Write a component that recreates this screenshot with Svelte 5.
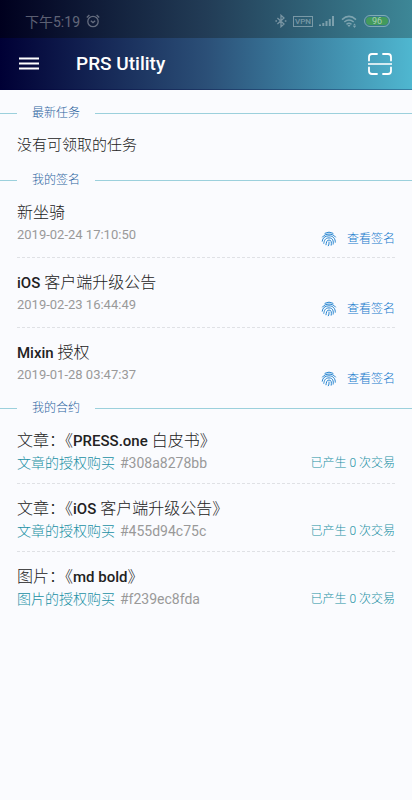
<script>
  const signatures = [
    { title: [['新坐骑', false]], date: '2019-02-24 17:10:50' },
    { title: [['iOS', true], [' 客户端升级公告', false]], date: '2019-02-23 16:44:49' },
    { title: [['Mixin', true], [' 授权', false]], date: '2019-01-28 03:47:37' }
  ];
  const contracts = [
    { kind: '文章', title: [['PRESS.one', true], [' 白皮书', false]], hash: '#308a8278bb', count: 0 },
    { kind: '文章', title: [['iOS', true], [' 客户端升级公告', false]], hash: '#455d94c75c', count: 0 },
    { kind: '图片', title: [['md bold', true]], hash: '#f239ec8fda', count: 0 }
  ];
</script>

{#snippet runs(parts)}{#each parts as [text, latin]}<span class:latin>{text}</span>{/each}{/snippet}

{#snippet heading(text)}
  <h2 class="divider"><span>{text}</span></h2>
{/snippet}

<div class="page">
  <div class="status">
    <span class="time">下午5:19</span>
    <svg width="14" height="14" viewBox="0 0 14 14" class="line" aria-hidden="true">
      <circle cx="7" cy="7.5" r="5.2" stroke-width="1.3" /><path stroke-width="1.3" d="M4.8 6.8 7 8.6l2.2-1.8M.8 3.4 3.4 1M13.2 3.4 10.6 1" />
    </svg>
    <div class="tray">
      <svg width="12" height="14" viewBox="0 0 12 14" class="line" aria-hidden="true">
        <path stroke-width="1.3" d="M2.4 4 9 10l-3 2.7V1.3L9 4l-6.6 6M.4 7h1.6M9.8 7h1.6" />
      </svg>
      <span class="vpn">VPN</span>
      <svg width="16" height="12" viewBox="0 0 16 12" class="solid" aria-hidden="true">
        <path d="M0 9.5h2V11H0zM3.3 8h2v3h-2zM6.5 6h2v5h-2zM9.8 4h2v7h-2zM13 1h2v10h-2z" />
      </svg>
      <svg width="17" height="13" viewBox="0 0 17 13" aria-hidden="true">
        <path class="line thick" d="M1 4.600q7-6.4 14 0M3.300 7q4.700-4 9.400 0M5.500 9.300q2.500-2 5 0" />
        <path class="solid" d="m6.400 10.300 1.600 1.700 1.600-1.700q-1.600-1-3.200 0zM12 10.500l1.500-2 1.500 2zM12 11h3l-1.500 2z" />
      </svg>
      <span class="battery"><span>96</span></span>
    </div>
  </div>

  <header>
    <button class="icon" aria-label="菜单">
      <svg width="20" height="13" viewBox="0 0 20 13"><path d="M0 1.5h20M0 6.5h20M0 11.5h20" stroke="#fff" stroke-width="2.2" /></svg>
    </button>
    <h1>PRS Utility</h1>
    <button class="icon scan" aria-label="扫码">
      <svg width="24" height="22" viewBox="0 0 24 22" fill="none" stroke="#fff" stroke-width="1.8">
        <path d="M1 7.500V4q0-3 3-3h5M15 1h5q3 0 3 3v3.500M1 14.500V18q0 3 3 3h5M15 21h5q3 0 3-3v-3.500" stroke-linecap="round" />
        <path d="M0 11h24" stroke-opacity=".85" />
      </svg>
    </button>
  </header>

  <main>
    <section>
      {@render heading('最新任务')}
      <p class="empty">没有可领取的任务</p>
    </section>

    <section>
      {@render heading('我的签名')}
      <ul>
        {#each signatures as item}
          <li>
            <h3>{@render runs(item.title)}</h3>
            <div class="meta">
              <time>{item.date}</time>
              <a class="view" href="#signature">
                <svg width="16" height="16" viewBox="0 0 16 16" aria-hidden="true">
                  <path d="M4 2.200q4-2.300 8 0M1.500 6C4 2 12 2 14.500 6M1.200 10.200C1.500 7 3.800 4.800 8 4.800s6.500 3 6.300 6.400M2.800 12.300C3.300 9.600 4 6.900 8 6.900s4.600 3.300 4.200 6.200M5 13.800C5.400 11.800 5.400 9 8 9s2.600 2.600 2.200 5.200M7.300 14.800C8.200 13.500 8 12.500 8 11" />
                </svg>
                查看签名
              </a>
            </div>
          </li>
        {/each}
      </ul>
    </section>

    <section>
      {@render heading('我的合约')}
      <ul class="contracts">
        {#each contracts as item}
          <li>
            <h3>{item.kind}：《{@render runs(item.title)}》</h3>
            <div class="meta">
              <span class="license">{item.kind}的授权购买</span>
              <span class="hash">{item.hash}</span>
              <a class="trades" href="#trades">已产生 {item.count} 次交易</a>
            </div>
          </li>
        {/each}
      </ul>
    </section>
  </main>
</div>

<style>
  :global(body) {
    margin: 0;
    background: #fafbfe;
  }
  .page {
    min-height: 100vh;
    background: #fafbfe;
    color: #222;
    font-family: Roboto, 'Noto Sans CJK SC', sans-serif;
    font-weight: 300;
  }
  h1, h2, h3, p, ul {
    margin: 0;
    padding: 0;
    font-weight: inherit;
  }
  ul {
    list-style: none;
  }
  a {
    text-decoration: none;
  }
  svg {
    display: block;
    flex: none;
  }

  .status {
    display: flex;
    align-items: center;
    gap: 6px;
    height: 38px;
    padding: 4px 22px 0 25px;
    box-sizing: border-box;
    background: linear-gradient(90deg, #00001e, #223c56 50%, #3d8797);
    color: rgba(255, 255, 255, 0.36);
    font-size: 14px;
    font-weight: 400;
  }
  .line {
    fill: none;
    stroke: currentColor;
  }
  .thick {
    stroke-width: 1.5;
  }
  .solid {
    fill: currentColor;
  }
  .tray {
    display: flex;
    align-items: center;
    gap: 6px;
    margin-left: auto;
  }
  .vpn {
    padding: 0 1px;
    border: 1px solid currentColor;
    font-size: 8px;
    line-height: 9px;
    font-weight: 500;
  }
  .battery {
    padding: 1px;
    border: 1px solid currentColor;
    border-radius: 6px;
  }
  .battery span {
    display: block;
    width: 22px;
    border-radius: 4px;
    background: #439a5c;
    color: #a5cfb4;
    font-size: 9px;
    line-height: 8px;
    text-align: center;
  }

  header {
    display: flex;
    align-items: center;
    height: 52px;
    padding: 0 20px 0 19px;
    box-sizing: border-box;
    border-bottom: 1px solid rgba(0, 0, 60, 0.3);
    background: linear-gradient(90deg, #000035, #2b4f77 50%, #4fb7d0) border-box;
    color: #fff;
  }
  .icon {
    padding: 0;
    border: 0;
    background: none;
    cursor: pointer;
  }
  .scan {
    margin-left: auto;
  }
  h1 {
    margin-left: 37px;
    font-size: 19px;
    line-height: 24px;
    font-weight: 500;
  }

  main {
    padding-top: 12px;
  }
  section {
    padding-top: 4px;
  }
  .divider {
    display: flex;
    align-items: center;
    gap: 15px;
    color: #2c64a0;
    font-size: 12px;
    line-height: 14px;
  }
  .divider::before,
  .divider::after {
    content: '';
    width: 17px;
    height: 1px;
    background: #9bd0dc;
  }
  .divider::after {
    flex: 1;
  }
  .empty {
    padding: 14px 17px 13px;
    font-size: 15px;
    line-height: 22px;
  }
  ul {
    padding-top: 1px;
  }
  li {
    height: 55px;
    margin: 0 17px;
    padding-top: 14px;
    border-bottom: 1px dashed #dfe1e5;
  }
  li:last-child {
    border-bottom: 0;
  }
  .contracts li {
    height: 53px;
  }
  h3 {
    font-size: 16px;
    line-height: 22px;
  }
  .latin {
    font-size: 15px;
    font-weight: 500;
  }
  .meta {
    display: flex;
    align-items: center;
    gap: 5px;
    font-size: 14px;
    line-height: 22px;
  }
  time,
  .hash {
    color: #999;
    font-weight: 400;
  }
  time {
    font-size: 13px;
  }
  .view,
  .trades {
    display: flex;
    align-items: center;
    gap: 8px;
    margin-left: auto;
    color: #1478cc;
    font-size: 12px;
  }
  .view {
    gap: 10px;
    padding-top: 4px;
  }
  time {
    align-self: flex-start;
  }
  .view svg {
    fill: none;
    stroke: #2484d0;
    stroke-width: 1;
    stroke-linecap: round;
  }
  .license,
  .trades {
    color: #1890a4;
  }
</style>
